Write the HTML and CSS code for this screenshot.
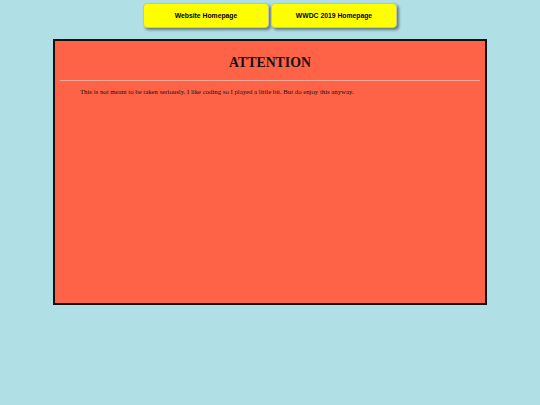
FILE: index.html
```html
<!DOCTYPE html>
<html>
<head>
<meta charset="utf-8">
<link rel="stylesheet" href="styles.css">
</head>
<body>
<nav class="nav">
  <a class="btn" href="#">Website Homepage</a>
  <a class="btn" href="#">WWDC 2019 Homepage</a>
</nav>
<div class="box">
  <h1 class="title">ATTENTION</h1>
  <hr class="rule">
  <p class="msg">This is not meant to be taken seriously. I like coding so I played a little bit. But do enjoy this anyway.</p>
</div>
</body>
</html>
```
FILE: styles.css
```css
html, body {
  margin: 0;
  padding: 0;
}
body {
  background: #b0e0e6;
  font-family: "Liberation Serif", "Times New Roman", serif;
}
.nav {
  display: flex;
  justify-content: center;
  gap: 2px;
  padding-top: 3px;
}
.btn {
  display: flex;
  align-items: center;
  justify-content: center;
  box-sizing: border-box;
  width: 126px;
  height: 25px;
  background: #ffff00;
  border: 1px solid #c8c890;
  border-radius: 4px;
  box-shadow: 2px 2px 3px rgba(0, 0, 0, 0.45);
  font-family: "Liberation Sans", Arial, sans-serif;
  font-weight: bold;
  font-size: 6.8px;
  color: #000;
  text-decoration: none;
}
.box {
  width: 430px;
  height: 261px;
  margin: 11px auto 0;
  background: #ff6347;
  border: 2px solid #111;
  padding: 1px 0 0;
  box-sizing: content-box;
}
.title {
  margin: 12px 0 0;
  text-align: center;
  font-size: 13.8px;
  line-height: 17px;
  font-weight: bold;
  color: #111;
}
.rule {
  margin: 9px 5px 0;
  border: none;
  border-top: 1px solid #f4a898;
  height: 0;
}
.msg {
  margin: 7px 0 0 25px;
  font-size: 6.75px;
  line-height: 8px;
  color: #111;
}
```
